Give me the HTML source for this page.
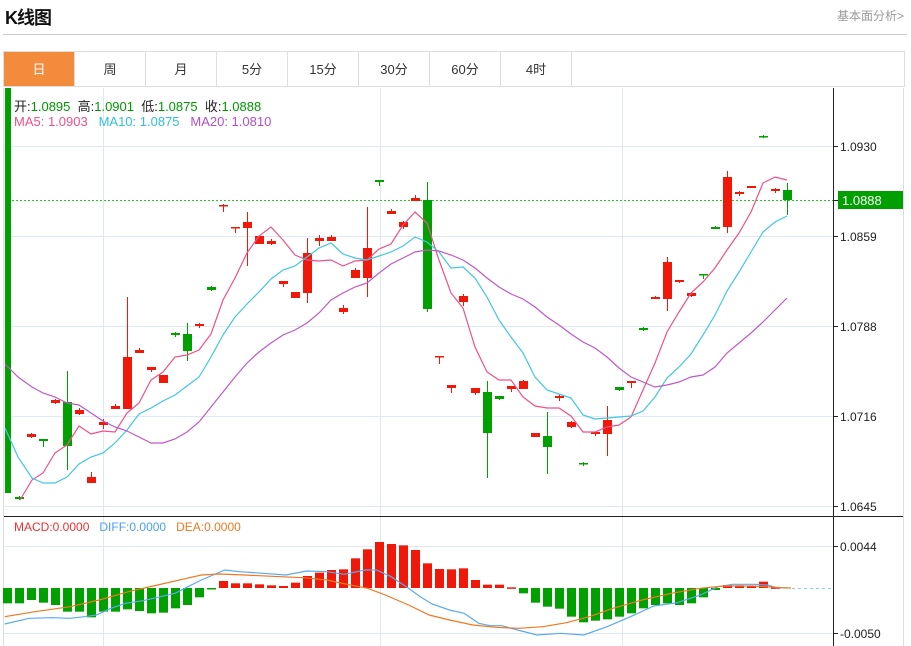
<!DOCTYPE html>
<html><head><meta charset="utf-8"><style>
body{margin:0;background:#fff;width:911px;height:646px;overflow:hidden;font-family:"Liberation Sans","Noto Sans CJK SC",sans-serif;position:relative}
.t{position:absolute;left:5px;top:4px;font-size:18px;font-weight:bold;color:#111;letter-spacing:-1px}
.r{position:absolute;left:837px;top:7px;font-size:12px;color:#999}
.hl{position:absolute;left:3px;top:34px;width:904px;height:1px;background:#ccc}
.tabs{position:absolute;left:3px;top:51px;width:902px;height:36px;border:1px solid #ddd;box-sizing:border-box;display:flex}
.tabs div{width:70px;border-right:1px solid #ddd;text-align:center;line-height:35px;font-size:13px;color:#333}
.tabs div.a{background:#f28c3c;color:#fff}
svg{position:absolute;left:0;top:0}
.lg{position:absolute;font-size:13px;white-space:nowrap}
</style></head><body>
<div class="t">K线图</div><div class="r">基本面分析&gt;</div><div class="hl"></div>
<div class="tabs"><div class="a">日</div><div>周</div><div>月</div><div>5分</div><div>15分</div><div>30分</div><div>60分</div><div>4时</div></div>
<svg id="s" width="911" height="646"></svg>
<div class="lg" style="left:14px;top:96px;color:#222">开:<span style="color:#090">1.0895</span>&nbsp; 高:<span style="color:#090">1.0901</span>&nbsp; 低:<span style="color:#090">1.0875</span>&nbsp; 收:<span style="color:#090">1.0888</span></div>
<div class="lg" style="left:14px;top:114px"><span style="color:#f0508a">MA5: 1.0903</span>&nbsp;&nbsp; <span style="color:#30c0dc">MA10: 1.0875</span>&nbsp;&nbsp; <span style="color:#b050c8">MA20: 1.0810</span></div>
<div class="lg" style="left:14px;top:520px;font-size:12px"><span style="color:#f03030">MACD:0.0000</span>&nbsp;&nbsp; <span style="color:#4aa0f0">DIFF:0.0000</span>&nbsp;&nbsp; <span style="color:#f07820">DEA:0.0000</span></div>
<script>
var s=document.getElementById('s'),h='';
function L(x1,y1,x2,y2,c,w,d){h+='<line x1="'+x1+'" y1="'+y1+'" x2="'+x2+'" y2="'+y2+'" stroke="'+c+'" stroke-width="'+(w||1)+'"'+(d?' stroke-dasharray="'+d+'"':'')+'/>';}
function R(x,y,w,hh,c){h+='<rect x="'+x+'" y="'+y+'" width="'+w+'" height="'+Math.max(hh,1.5)+'" fill="'+c+'"/>';}
function T(x,y,t,c,f){h+='<text x="'+x+'" y="'+y+'" font-size="'+(f||12)+'" fill="'+(c||'#333')+'" font-family="Liberation Sans">'+t+'</text>';}
var G='#dfe9f1';
[146,236,326,416,506,546,633].forEach(function(y){L(4,y+.5,833,y+.5,G)});
[103,380,622].forEach(function(x){L(x+.5,88,x+.5,646,G)});
L(3.5,88,3.5,646,'#ddd');L(903.5,88,903.5,646,'#ddd');L(833.5,88,833.5,646,'#222');L(4,516.5,903,516.5,'#222');
[['1.0930',146],['1.0859',236],['1.0788',326],['1.0716',416],['1.0645',506],['0.0044',546],['-0.0050',633]].forEach(function(a){L(833,a[1]+.5,838,a[1]+.5,'#222');T(840,a[1]+5,a[0],'#222',12)});
L(12,200.5,833,200.5,'#2c2',1,'2,2');
var RC='#f01808',GC='#00a000';
R(5,88,6,405,GC);
var c=[[0,497,499,496,500,'g'],[1,434,437,433,438,'r'],[2,439,441,439,447,'g'],[3,400,403,399,404,'r'],[4,402,446,371,470,'g'],[5,410,414,408,415,'r'],[6,477,483,472,483,'r'],[7,422,425,419,429,'r'],[8,406,409,404,409,'r'],[9,357,409,297,409,'r'],[10,350,353,348,353,'r'],[11,367,370,367,372,'r'],[12,375,383,375,383,'r'],[13,333,335,332,337,'g'],[14,334,351,323,361,'g'],[15,324,326,323,328,'r'],[16,287,290,286,291,'g'],[17,205,206,204,212,'r'],[18,227,228,227,233,'r'],[19,222,228,212,266,'r'],[20,236,244,236,244,'r'],[21,241,244,239,245,'r'],[22,281,284,281,287,'r'],[23,292,298,292,298,'r'],[24,253,293,238,303,'r'],[25,238,241,235,246,'r'],[26,237,241,235,241,'r'],[27,308,312,305,314,'r'],[28,270,278,268,278,'r'],[29,248,278,207,297,'r'],[30,180,182,180,186,'g'],[31,211,214,209,214,'r'],[32,222,227,221,229,'r'],[33,198,201,195,201,'r'],[34,200,309,182,312,'g'],[35,356,357,356,364,'r'],[36,385,388,385,393,'r'],[37,296,302,294,306,'r'],[38,388,393,388,395,'r'],[39,392,433,381,478,'g'],[40,396,399,396,400,'g'],[41,386,389,386,392,'r'],[42,381,389,380,389,'r'],[43,433,437,433,437,'r'],[44,436,447,412,474,'g'],[45,396,398,394,401,'r'],[46,422,427,421,428,'r'],[47,463,464,462,466,'g'],[48,432,434,432,436,'r'],[49,420,434,406,456,'r'],[50,387,390,387,391,'g'],[51,381,383,381,388,'r'],[52,328,330,327,331,'g'],[53,297,299,296,299,'r'],[54,262,299,257,311,'r'],[55,280,282,280,283,'r'],[56,293,296,293,297,'r'],[57,274,275,274,279,'g'],[58,227,229,226,229,'g'],[59,177,227,171,233,'r'],[60,192,194,191,196,'r'],[61,186,188,186,188,'r'],[62,136,137,135,138,'g'],[63,189,191,188,193,'r'],[64,190,200,183,215,'g']];
c.forEach(function(k){var x=19+12*k[0],col=k[5]=='r'?RC:GC;L(x+.5,k[3],x+.5,k[4],col);R(x-4,k[1],9,k[2]-k[1],col);});
function P(pts,col,extra){h+='<polyline fill="none" stroke="'+col+'" stroke-width="1.2" points="'+pts+'" '+(extra||'')+'/>';}
P('20,500 32,480 43,473 55,453 67,445 79,426 91,434 103,431 115,432 127,413 139,403 151,380 163,372 175,357 187,355 199,350 211,334 223,300 235,278 247,253 259,236 271,227 283,240 295,255 307,260 319,261 331,260 343,266 355,261 367,260 379,249 391,244 403,225 415,212 427,223 439,260 451,293 463,308 475,347 487,372 499,380 511,380 523,397 535,406 547,408 559,408 571,416 583,432 595,432 607,427 619,425 631,417 643,390 655,363 667,332 679,312 691,293 703,282 715,268 727,250 739,233 751,212 763,183 775,177 787,180','#f0508a');
P('5,428 18,457 32,478 43,483 55,483 67,477 79,464 91,457 103,453 115,443 127,430 139,414 151,408 163,401 175,395 187,386 199,377 211,357 223,335 235,317 247,304 259,292 271,279 283,270 295,266 307,257 319,248 331,243 343,254 355,258 367,260 379,256 391,252 403,246 415,237 427,242 439,252 451,268 463,267 475,278 487,297 499,320 511,337 523,353 535,377 547,390 559,394 571,398 583,415 595,419 607,418 619,417 631,416 643,411 655,397 667,378 679,367 691,354 703,335 715,315 727,291 739,272 751,252 763,232 775,222 787,216','#40c8e0');
P('5,364 18,377 32,387 43,393 55,397 67,403 79,405 91,413 103,421 115,427 127,431 139,437 151,443 163,443 175,439 187,432 199,422 211,407 223,392 235,377 247,363 259,352 271,343 283,335 295,330 307,323 319,313 331,300 343,293 355,287 367,283 379,273 391,264 403,258 415,252 427,250 439,251 451,255 463,260 475,268 487,278 499,287 511,294 523,299 535,307 547,317 559,325 571,334 583,342 595,348 607,357 619,368 631,377 643,382 655,387 667,385 679,382 691,377 703,375 715,367 727,353 739,343 751,333 763,322 775,310 787,298','#c058c8');
// MACD bars
var b=[[15,370],[35,370],[55,360],[75,368],[95,375],[115,395],[135,395],[155,412],[175,395],[195,395],[215,388],[235,393],[255,400],[275,398],[295,385],[320,375],[343,352],[365,327],[385,303],[405,310],[425,310],[445,313],[465,316],[485,318],[508,308],[528,288],[550,278],[570,270],[590,268],[612,235],[632,208],[652,186],[672,192],[692,196],[715,210],[735,250],[755,267],[775,268],[797,265],[817,300],[837,314],[857,314],[880,322],[900,340],[920,368],[940,380],[962,386],[982,410],[1002,427],[1022,422],[1045,418],[1065,410],[1085,400],[1105,385],[1127,375],[1147,370],[1167,375],[1187,370],[1210,352],[1230,330],[1250,315],[1270,316],[1290,317],[1310,305],[1330,322]];
b.forEach(function(p,i){var x=7+12*i,y=p[1]/3+480,z=588;if(y>z)R(x-4,z,9,y-z,GC);else R(x-4,y,9,z-y,RC);});
function Z(a){return a.map(function(p){return (p[0]/1.713).toFixed(1)+','+(p[1]/3+480).toFixed(1)}).join(' ');}
P(Z([[8,432],[50,415],[90,413],[120,415],[145,410],[165,405],[190,385],[215,370],[245,362],[275,350],[300,340],[320,322],[345,300],[365,285],[385,270],[410,275],[450,280],[490,285],[525,273],[560,275],[590,283],[625,270],[645,270],[670,290],[700,325],[720,350],[740,372],[770,390],[795,400],[820,430],[840,437],[860,437],[880,447],[920,465],[960,460],[1000,465],[1040,440],[1080,410],[1120,378],[1160,368],[1200,345],[1230,320],[1255,313],[1290,313],[1315,315],[1330,323],[1350,324]]),'#5aaaf0');
P(Z([[8,410],[60,395],[120,380],[170,360],[220,335],[270,315],[320,295],[345,285],[375,282],[420,285],[480,290],[520,293],[560,300],[600,315],[630,325],[660,345],[700,375],[735,405],[770,420],[810,435],[850,442],[890,445],[930,440],[970,428],[1010,410],[1050,385],[1100,360],[1150,340],[1200,325],[1240,318],[1290,318],[1340,323],[1355,324]]),'#f07820');
L(792,588.5,833,588.5,'#8cd0f0',1,'3,3');
// price label
R(838,191,65,18,'#00a000');L(833,200.5,838,200.5,'#222');T(842,205,'1.0888','#fff',13);
s.innerHTML=h;
</script>
</body></html>
